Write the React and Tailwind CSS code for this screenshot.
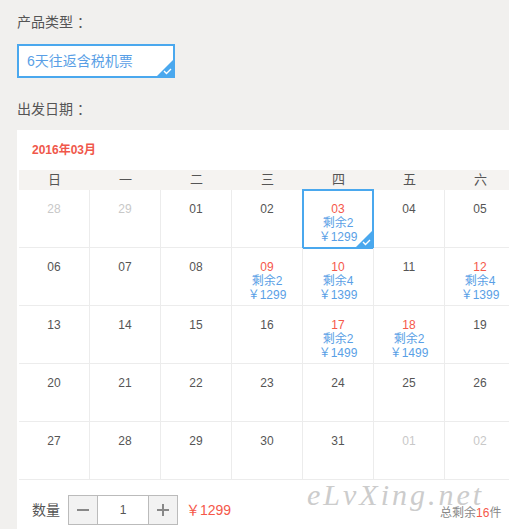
import React from "react";

const font = { fontFamily: '"Liberation Sans", "Noto Sans CJK SC", sans-serif' };

const weekDays = ["日", "一", "二", "三", "四", "五", "六"];

// d: label, m: other month, s: stock, p: price, sel: selected
const weeks = [
  [{ d: "28", m: true }, { d: "29", m: true }, { d: "01" }, { d: "02" }, { d: "03", s: 2, p: 1299, sel: true }, { d: "04" }, { d: "05" }],
  [{ d: "06" }, { d: "07" }, { d: "08" }, { d: "09", s: 2, p: 1299 }, { d: "10", s: 4, p: 1399 }, { d: "11" }, { d: "12", s: 4, p: 1399 }],
  [{ d: "13" }, { d: "14" }, { d: "15" }, { d: "16" }, { d: "17", s: 2, p: 1499 }, { d: "18", s: 2, p: 1499 }, { d: "19" }],
  [{ d: "20" }, { d: "21" }, { d: "22" }, { d: "23" }, { d: "24" }, { d: "25" }, { d: "26" }],
  [{ d: "27" }, { d: "28" }, { d: "29" }, { d: "30" }, { d: "31" }, { d: "01", m: true }, { d: "02", m: true }],
];

const CornerCheck = () => (
  <svg className="absolute right-0 bottom-0" width="16" height="16" viewBox="0 0 16 16">
    <polygon points="16,0 16,16 0,16" fill="#4aa8ee" />
    <polyline points="7,11 9.5,13.5 14,9" fill="none" stroke="#fff" strokeWidth="1.4" />
  </svg>
);

const DayCell = ({ cell }) => {
  const color = cell.m ? "text-[#c8c8c8]" : cell.s ? "text-[#f5584a]" : "text-[#555]";
  return (
    <div className="relative w-[71px] h-[58px] shrink-0 border-r border-b border-[#ececec] text-center text-[12px] leading-[14px] pt-[12px]">
      <div className={color}>{cell.d}</div>
      {cell.s && (
        <>
          <div className="text-[#5a9fe6]">剩余{cell.s}</div>
          <div className="text-[#5a9fe6]">￥{cell.p}</div>
        </>
      )}
      {cell.sel && (
        <div className="absolute -left-[1px] -top-[1px] w-[72px] h-[60px] border-2 border-[#4aa8ee]">
          <CornerCheck />
        </div>
      )}
    </div>
  );
};

export default function App() {
  return (
    <div className="w-[509px] h-[529px] overflow-hidden bg-[#f1f0ee] text-[#555]" style={font}>
      <div className="pl-[17px] pt-[13px]">
        <div className="text-[14px] leading-[18px] text-[#555]">产品类型 ：</div>
        <div className="relative mt-[13px] w-[158px] h-[34px] border-2 border-[#4aa8ee] bg-white flex items-center pl-[8px]">
          <span className="text-[14px] text-[#5a9fe6]">6天往返含税机票</span>
          <CornerCheck />
        </div>
        <div className="mt-[22px] text-[14px] leading-[18px] text-[#555]">出发日期 ：</div>

        <div className="relative mt-[12px] w-[520px] bg-white pl-[2px]">
          <div className="h-[40px] flex items-center pl-[13px] text-[12px] font-bold text-[#f0574a]">2016年03月</div>
          <div className="flex h-[20px] bg-[#f5f3f1]">
            {weekDays.map((w) => (
              <div key={w} className="w-[71px] shrink-0 text-center text-[13px] leading-[20px] text-[#555]">{w}</div>
            ))}
          </div>
          {weeks.map((row, i) => (
            <div key={i} className="flex">
              {row.map((c, j) => (
                <DayCell key={j} cell={c} />
              ))}
            </div>
          ))}

          <div className="relative h-[60px] flex items-start pt-[15px] pl-[13px]">
            <span className="text-[14px] leading-[30px] text-[#555] mr-[8px]">数量</span>
            <div className="flex h-[30px] border border-[#bbb]">
              <div className="w-[29px] bg-[#f2f2f2] border-r border-[#bbb] flex items-center justify-center">
                <div className="w-[12px] h-[2px] bg-[#888]" />
              </div>
              <div className="w-[50px] flex items-center justify-center text-[12px] text-[#555]">1</div>
              <div className="relative w-[29px] bg-[#f2f2f2] border-l border-[#bbb] flex items-center justify-center">
                <div className="w-[12px] h-[2px] bg-[#888]" />
                <div className="absolute w-[2px] h-[12px] bg-[#888]" />
              </div>
            </div>
            <span className="ml-[8px] text-[14px] leading-[30px] text-[#f5584a]">￥1299</span>
            <span
              className="absolute left-[288px] top-[4px] text-[30px] leading-[22px] italic text-[#cccccc] tracking-[3px]"
              style={{ fontFamily: '"Liberation Serif", serif' }}
            >
              eLvXing.net
            </span>
            <span className="absolute left-[421px] top-[26px] text-[12px] leading-[14px] text-[#888]">
              总剩余<span className="text-[#f5584a]">16</span>件
            </span>
          </div>
        </div>
      </div>
    </div>
  );
}
